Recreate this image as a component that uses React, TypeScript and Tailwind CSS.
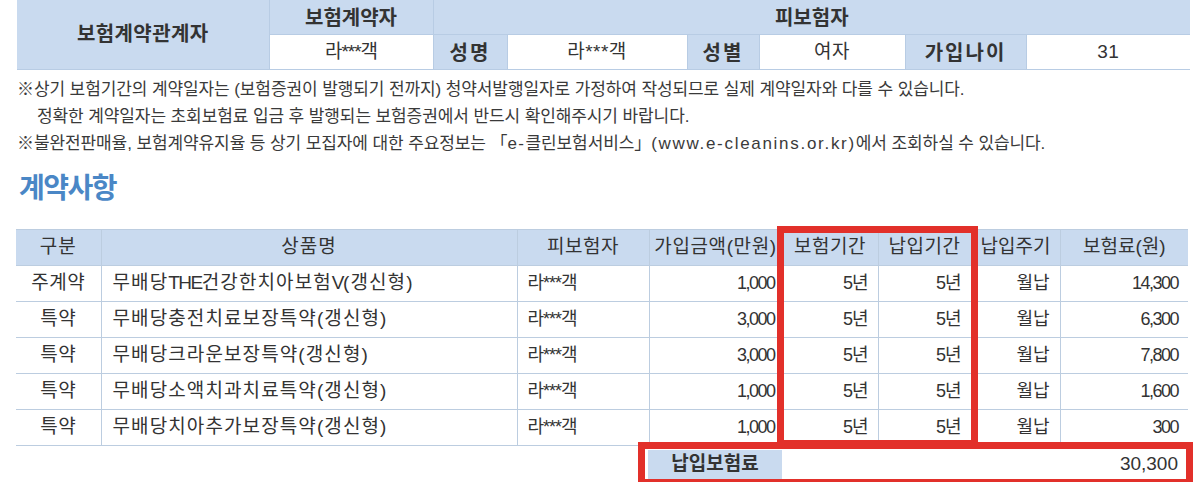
import React from "react";

const blue = "bg-[#c9daef]";

const insured = [
    { label: "성명", value: "라***객" },
    { label: "성별", value: "여자" },
    { label: "가입나이", value: "31" },
];

const rows = [
    { kind: "주계약", name: ["무배당", "THE", "건강한치아보험", "V", "(갱신형)"], amount: "1,000", premium: "14,300" },
    { kind: "특약", name: ["무배당충전치료보장특약(갱신형)"], amount: "3,000", premium: "6,300" },
    { kind: "특약", name: ["무배당크라운보장특약(갱신형)"], amount: "3,000", premium: "7,800" },
    { kind: "특약", name: ["무배당소액치과치료특약(갱신형)"], amount: "1,000", premium: "1,600" },
    { kind: "특약", name: ["무배당치아추가보장특약(갱신형)"], amount: "1,000", premium: "300" },
];

function PartiesTable() {
    return (
        <table className="ml-[17px] w-[1173px] table-fixed border-collapse text-[20px] text-[#333]">
            <colgroup>
                <col className="w-[252px]" />
                <col className="w-[164px]" />
                <col className="w-[74px]" />
                <col className="w-[180px]" />
                <col className="w-[72px]" />
                <col className="w-[146px]" />
                <col className="w-[121px]" />
                <col className="w-[164px]" />
            </colgroup>
            <tbody>
                <tr className="h-[34px]">
                    <th
                        rowSpan={2}
                        className={`${blue} border-r border-b border-[#b8cce4] font-bold tracking-[0.4px]`}
                    >
                        보험계약관계자
                    </th>
                    <th className={`${blue} border-r border-b border-[#b8cce4] pt-[2px] font-bold`}>보험계약자</th>
                    <th colSpan={6} className={`${blue} border-b border-[#b8cce4] pt-[2px] font-bold`}>
                        피보험자
                    </th>
                </tr>
                <tr className="h-[35px]">
                    <td className="border-r border-b border-[#b8cce4] pt-[2px] text-center text-[19px] tracking-[-1px]">
                        라***객
                    </td>
                    {insured.map((item, i) => (
                        <React.Fragment key={item.label}>
                            <th className={`${blue} border-r border-b border-[#b8cce4] pt-[2px] font-bold tracking-[2px]`}>
                                {item.label}
                            </th>
                            <td
                                className={`border-b border-[#b8cce4] pt-[2px] text-center text-[19px] tracking-[0.5px] ${
                                    i < insured.length - 1 ? "border-r" : ""
                                }`}
                            >
                                {item.value}
                            </td>
                        </React.Fragment>
                    ))}
                </tr>
            </tbody>
        </table>
    );
}

function Notes() {
    return (
        <div className="mt-[6px] pl-[17px] text-[17px] leading-[27px] tracking-[-0.1px] text-[#3a3a3a]">
            <p>
                ※상기 보험기간의 계약일자는 (보험증권이 발행되기 전까지) 청약서발행일자로 가정하여 작성되므로 실제
                계약일자와 다를 수 있습니다.
            </p>
            <p className="pl-[20px]">정확한 계약일자는 초회보험료 입금 후 발행되는 보험증권에서 반드시 확인해주시기 바랍니다.</p>
            <p>
                ※불완전판매율, 보험계약유지율 등 상기 모집자에 대한 주요정보는 「
                <span className="tracking-[1.5px]">e-</span>클린보험서비스」
                <span className="tracking-[1.7px]">(www.e-cleanins.or.kr)</span>에서 조회하실 수 있습니다.
            </p>
        </div>
    );
}

function ContractTable() {
    const th = `${blue} border-r border-b border-[#bccde0] font-normal`;
    const td = "border-r border-b border-[#bccde0]";
    return (
        <table className="ml-[16px] w-[1172px] table-fixed border-collapse text-[19px] text-[#333]">
            <colgroup>
                <col className="w-[85px]" />
                <col className="w-[416px]" />
                <col className="w-[132px]" />
                <col className="w-[133px]" />
                <col className="w-[96px]" />
                <col className="w-[93px]" />
                <col className="w-[89px]" />
                <col className="w-[128px]" />
            </colgroup>
            <thead>
                <tr className="h-[36px] border-t border-[#bccde0]">
                    <th className={`${th} tracking-[1px]`}>구분</th>
                    <th className={`${th} tracking-[1px]`}>상품명</th>
                    <th className={`${th} tracking-[0.5px]`}>피보험자</th>
                    <th className={`${th} tracking-[0.6px]`}>가입금액(만원)</th>
                    <th className={`${th} tracking-[0.5px]`}>보험기간</th>
                    <th className={`${th} tracking-[0.5px]`}>납입기간</th>
                    <th className={`${th} tracking-[0px]`}>납입주기</th>
                    <th className={`${blue} border-b border-[#bccde0] font-normal`}>보험료(원)</th>
                </tr>
            </thead>
            <tbody>
                {rows.map((r, i) => (
                    <tr key={i} className="h-[36px]">
                        <td className={`${td} text-center tracking-[0.5px]`}>{r.kind}</td>
                        <td className={`${td} pl-[11px] tracking-[1.1px]`}>
                            {r.name.map((part, j) =>
                                /^[A-Z]+$/.test(part) ? (
                                    <span key={j} className="tracking-[-1.5px]">
                                        {part}
                                    </span>
                                ) : (
                                    <span key={j}>{part}</span>
                                )
                            )}
                        </td>
                        <td className={`${td} pl-[10px] text-[18px] tracking-[-1px]`}>라***객</td>
                        <td className={`${td} pr-[7px] text-right text-[18px] tracking-[-1.5px]`}>{r.amount}</td>
                        <td className={`${td} pr-[10px] text-right text-[18px] tracking-[-1px]`}>5년</td>
                        <td className={`${td} pr-[10px] text-right text-[18px] tracking-[-1px]`}>5년</td>
                        <td className={`${td} pr-[10px] text-right text-[18px]`}>월납</td>
                        <td className="border-b border-[#bccde0] pr-[10px] text-right text-[18px] tracking-[-1.5px]">
                            {r.premium}
                        </td>
                    </tr>
                ))}
            </tbody>
        </table>
    );
}

export default function App() {
    return (
        <div className="h-[482px] overflow-hidden bg-white font-['Liberation_Sans','Noto_Sans_CJK_KR',sans-serif]">
            <PartiesTable />
            <Notes />
            <h2 className="mt-[14px] pl-[19px] text-[28px] font-bold leading-[36px] tracking-[-1.5px] text-[#4a87c6]">
                계약사항
            </h2>
            <div className="relative mt-[22px]">
                <ContractTable />
                <div className="ml-[648px] mt-[4px] flex h-[29px] w-[538px] text-[18px] text-[#333]">
                    <div className={`${blue} flex w-[134px] items-center justify-center text-[19px] font-bold`}>
                        납입보험료
                    </div>
                    <div className="flex flex-1 items-center justify-end pr-[8px] text-[19px]">30,300</div>
                </div>
                {/* red annotation boxes */}
                <div className="absolute left-[777px] top-[-3px] h-[221px] w-[201px] border-[7px] border-[#e2302a]" />
                <div className="absolute left-[638px] top-[213px] h-[44px] w-[555px] border-[7px] border-[#e2302a]" />
            </div>
        </div>
    );
}
